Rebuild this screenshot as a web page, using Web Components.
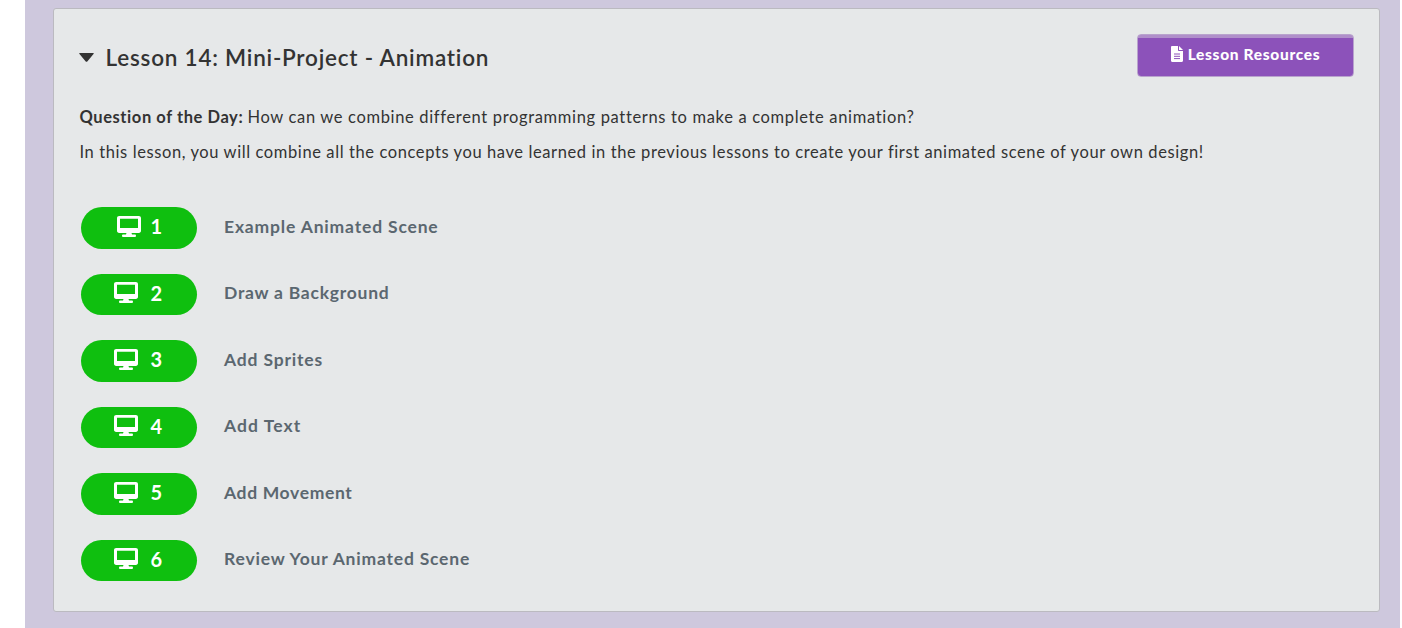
<!DOCTYPE html>
<html lang="en">
<head>
<meta charset="utf-8">
<title>Lesson 14: Mini-Project - Animation</title>
<style>
body { margin: 0; background: #fff; font-family: Lato, "Open Sans", sans-serif; color: #333; }
</style>
</head>
<body>
<lesson-page>
  <lesson-card>
    <lesson-title slot="title">Lesson 14: Mini-Project - Animation</lesson-title>
    <resource-button slot="action">Lesson Resources</resource-button>
    <lesson-summary slot="summary"></lesson-summary>
    <lesson-step number="1" style="--ls:.83px">Example Animated Scene</lesson-step>
    <lesson-step number="2" style="--ls:.75px">Draw a Background</lesson-step>
    <lesson-step number="3" style="--ls:.83px">Add Sprites</lesson-step>
    <lesson-step number="4" style="--ls:1.05px">Add Text</lesson-step>
    <lesson-step number="5" style="--ls:.65px">Add Movement</lesson-step>
    <lesson-step number="6" style="--ls:.8px">Review Your Animated Scene</lesson-step>
  </lesson-card>
</lesson-page>
<script>
function define(name, html, setup) {
  customElements.define(name, class extends HTMLElement {
    constructor() {
      super();
      this.attachShadow({ mode: 'open' }).innerHTML = html;
    }
    connectedCallback() { if (setup) setup(this); }
  });
}

define('lesson-page', `
<style>
:host { display: block; box-sizing: border-box; height: 628px; margin: 0 2px 0 25px; padding: 8px 20px 16px 28px; background: #cec8dd; }
</style><slot></slot>`);

define('lesson-card', `
<style>
:host { display: flex; flex-direction: column; box-sizing: border-box; height: 604px; border: 1px solid #bbbac0; border-radius: 3px; background: #e6e8e9; padding: 25px 25px 0 25.5px; }
header { display: flex; justify-content: space-between; align-items: flex-start; height: 68px; }
.steps { display: flex; flex-direction: column; gap: 25px; margin-top: 35px; }
</style>
<header><slot name="title"></slot><slot name="action"></slot></header>
<slot name="summary"></slot>
<div class="steps"><slot></slot></div>`);

define('lesson-title', `
<style>
:host { display: flex; align-items: center; height: 47px; font-size: 22.5px; font-weight: 600; letter-spacing: .78px; white-space: nowrap; color: #333; }
svg { width: 15px; height: 9px; margin: 0 12px 0 -1px; }
</style>
<svg viewBox="0 0 15 9" fill="#333"><path d="M.8 0h13.400c.7 0 .8.600.3 1.100L8.500 8.200Q7.500 9.200 6.500 8.200L.5 1.100C0 .6.1 0 .8 0z"/></svg><span><slot></slot></span>`);

define('resource-button', `
<style>
:host { display: block; }
button { display: flex; align-items: center; justify-content: center; box-sizing: border-box; width: 217px; height: 43px; margin: 0; padding: 0 0 3px 0; border: 1px solid #b9a3cd; border-radius: 4px; background: linear-gradient(#b08fca 3px, #8c52ba 3px); color: #fff; font: 900 15.5px Lato, sans-serif; letter-spacing: .68px; white-space: nowrap; }
svg { width: 12px; height: 16px; margin-right: 5px; }
</style>
<button><svg viewBox="0 0 12 16"><path fill="#fff" d="M1.200 0H7v4.200c0 .5.3.8.8.8H12v9.800c0 .7-.5 1.200-1.200 1.200H1.200C.5 16 0 15.500 0 14.800V1.200C0 .5.5 0 1.200 0zM8 0l4 4H8z"/><path d="M3 8h6M3 10.300h6M3 12.600h6" stroke="#8c52ba"/></svg><span><slot></slot></span></button>`);

define('lesson-summary', `
<style>
:host { display: block; font-size: 16.5px; line-height: 23px; color: #333; }
p { margin: 0 0 12px; white-space: nowrap; padding-top: 4px; height: 19px; }
b { font-weight: 700; letter-spacing: .57px; }
.question { letter-spacing: .66px; }
.intro { letter-spacing: .6px; }
</style>
<p><b>Question of the Day:</b> <span class="question">How can we combine different programming patterns to make a complete animation?</span></p>
<p><span class="intro">In this lesson, you will combine all the concepts you have learned in the previous lessons to create your first animated scene of your own design!</span></p>`);

define('lesson-step', `
<style>
:host { display: flex; align-items: center; height: 41.500px; padding-left: 1.5px; }
.pill { display: flex; align-items: center; justify-content: center; box-sizing: border-box; width: 116px; height: 41.500px; padding: 0 1.5px 3px 0; border-radius: 21px; background: #0fbf0f; color: #fff; font-size: 20px; font-weight: 700; }
:host([number="1"]) .pill { padding-right: 0; }
:host([number="1"]) svg { margin: 0 9.5px 0 1px; }
svg { width: 24px; height: 21px; margin-right: 12px; }
.label { margin-left: 27px; font-size: 17.5px; font-weight: 700; letter-spacing: var(--ls); color: #5b6770; white-space: nowrap; padding-bottom: 2.6px; }
</style>
<div class="pill"><svg viewBox="0 0 24 21" fill="#fff"><path fill-rule="evenodd" d="M2.200 0h19.600C23.100 0 24 .9 24 2.200v12.600c0 1.300-.9 2.200-2.200 2.200H14.500l.5 1.500h2.700c.8 0 1.300.4 1.300 1.200s-.5 1.300-1.300 1.300H6.300c-.8 0-1.300-.5-1.300-1.300s.5-1.200 1.300-1.200H9l.5-1.500H2.200C.9 17 0 16.100 0 14.800V2.200C0 .9.9 0 2.200 0zM3 2.800v9.200h18V2.800z"/></svg><span class="number"></span></div><span class="label"><slot></slot></span>`,
  el => { el.shadowRoot.querySelector('.number').textContent = el.getAttribute('number'); });
</script>
</body>
</html>
